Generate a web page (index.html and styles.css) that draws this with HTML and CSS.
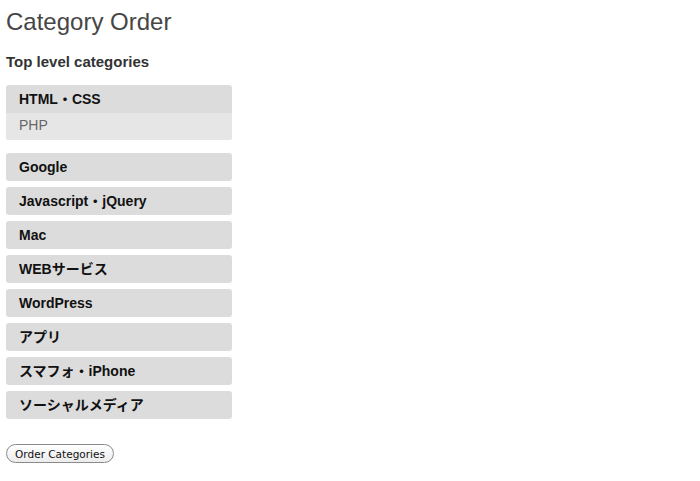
FILE: index.html
```html
<!DOCTYPE html>
<html>
<head>
<meta charset="utf-8">
<link rel="stylesheet" href="styles.css">
</head>
<body>
<div class="wrap">
  <h1 class="title">Category Order</h1>
  <h3 class="subtitle">Top level categories</h3>
  <ul class="cats">
    <li class="cat">
      <div class="cat-name">HTML・CSS</div>
      <div class="cat-child">PHP</div>
    </li>
    <li class="cat"><div class="cat-name">Google</div></li>
    <li class="cat"><div class="cat-name">Javascript・jQuery</div></li>
    <li class="cat"><div class="cat-name">Mac</div></li>
    <li class="cat"><div class="cat-name">WEBサービス</div></li>
    <li class="cat"><div class="cat-name">WordPress</div></li>
    <li class="cat"><div class="cat-name">アプリ</div></li>
    <li class="cat"><div class="cat-name">スマフォ・iPhone</div></li>
    <li class="cat"><div class="cat-name">ソーシャルメディア</div></li>
  </ul>
  <button class="btn">Order Categories</button>
</div>
</body>
</html>
```
FILE: styles.css
```css
html, body {
  margin: 0;
  padding: 0;
  background: #fff;
}
body {
  font-family: "Liberation Sans", Arial, "Noto Sans CJK JP", sans-serif;
  color: #333;
}
.wrap {
  padding: 0 6px;
}
.title {
  margin: 0;
  padding-top: 7px;
  font-size: 24px;
  font-weight: normal;
  line-height: 30px;
  color: #464646;
}
.subtitle {
  margin: 16px 0 0;
  font-size: 15px;
  line-height: 18px;
  font-weight: bold;
  color: #333;
}
.cats {
  list-style: none;
  margin: 14px 0 0;
  padding: 0;
  width: 226px;
  display: flex;
  flex-direction: column;
  gap: 6px;
}
.cat {
  background: #dcdcdc;
  border-radius: 3px;
  overflow: hidden;
}
.cats .cat:first-child {
  margin-bottom: 7px;
}
.cat-name {
  height: 28px;
  line-height: 28px;
  padding-left: 13px;
  font-size: 14px;
  font-weight: bold;
  color: #111;
}
.cat-child {
  height: 27px;
  line-height: 25px;
  padding-left: 13px;
  font-size: 14px;
  background: #e6e6e6;
  color: #666;
}
.btn {
  margin-top: 25px;
  height: 19px;
  width: 108px;
  padding: 0;
  border: 1px solid #8a8a8a;
  border-radius: 10px;
  background: linear-gradient(#ffffff, #ececec);
  font-family: "DejaVu Sans", "Liberation Sans", sans-serif;
  font-size: 10.5px;
  color: #111;
  line-height: 16px;
}
```
